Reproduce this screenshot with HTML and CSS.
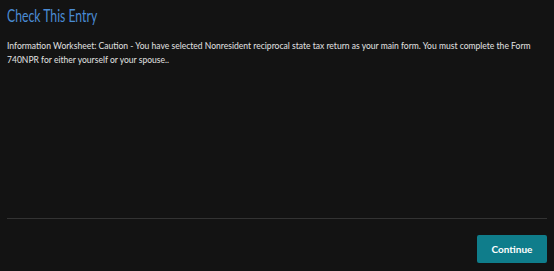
FILE: index.html
```html
<!DOCTYPE html>
<html>
<head>
<meta charset="utf-8">
<link rel="stylesheet" href="styles.css">
</head>
<body>
<div class="dialog">
  <h1 class="title"><span class="title-text">Check This Entry</span></h1>
  <p class="message">Information Worksheet: Caution - You have selected Nonresident reciprocal state tax return as your main form. You must complete the Form 740NPR for either yourself or your spouse..</p>
  <div class="spacer"></div>
  <div class="divider"></div>
  <div class="footer">
    <button class="btn">Continue</button>
  </div>
</div>
</body>
</html>
```

FILE: styles.css
```css
html, body {
  margin: 0;
  padding: 0;
  background: #131313;
  height: 100%;
}
.dialog {
  box-sizing: border-box;
  height: 271px;
  width: 554px;
  padding: 0 7px 0 7px;
  display: flex;
  flex-direction: column;
  font-family: "Lato", "Liberation Sans", sans-serif;
}
.title {
  margin: 5px 0 0 0;
  font-size: 16.5px;
  font-weight: 400;
  line-height: 22px;
  color: #4a8bd3;
}
.title-text {
  display: inline-block;
  transform: scaleX(0.74);
  transform-origin: left center;
}
.message {
  margin: 12px 0 0 0;
  font-size: 8.55px;
  line-height: 14px;
  color: #e2e2e2;
}
.spacer {
  flex: 1;
}
.divider {
  height: 1px;
  background: #333;
  margin-bottom: 16px;
}
.footer {
  display: flex;
  justify-content: flex-end;
  padding-bottom: 8px;
}
.btn {
  width: 70px;
  height: 28px;
  border: none;
  border-radius: 2px;
  background: #0f7d8b;
  color: #fff;
  font-family: "Lato", "Liberation Sans", sans-serif;
  font-weight: 700;
  font-size: 10px;
  padding: 0;
}
```
